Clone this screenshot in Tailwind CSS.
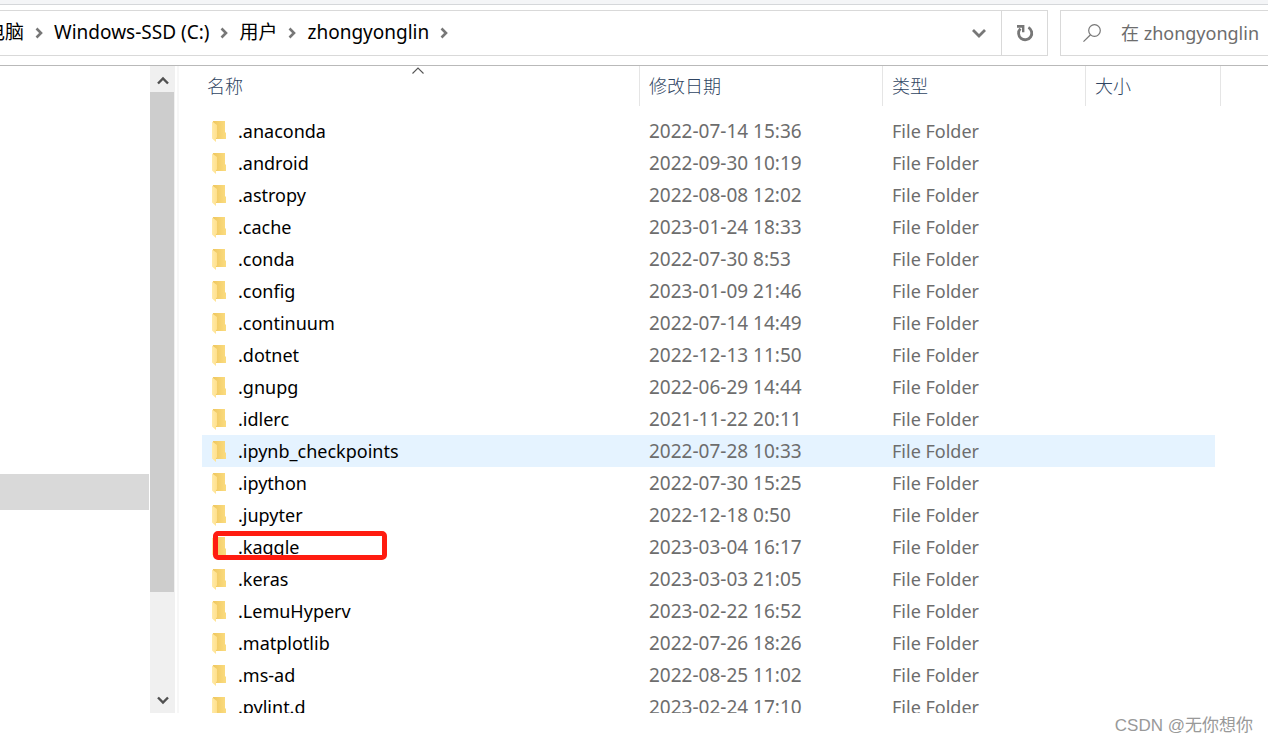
<!DOCTYPE html>
<html lang="zh-CN">
<head>
<meta charset="utf-8">
<title>zhongyonglin</title>
<script src="https://cdn.jsdelivr.net/npm/@tailwindcss/browser@4"></script>
</head>
<body class="flex h-screen flex-col overflow-hidden bg-white font-['Noto_Sans','Noto_Sans_CJK_SC',sans-serif] text-lg text-black">
<svg class="absolute size-0" aria-hidden="true">
  <defs>
    <linearGradient id="back" x1="0" x2="1"><stop offset="0" stop-color="#efc75f"/><stop offset="1" stop-color="#fbdc80"/></linearGradient>
    <linearGradient id="front" x1="0" x2="1"><stop offset="0" stop-color="#ffeaa8"/><stop offset="1" stop-color="#ffe08c"/></linearGradient>
    <symbol id="folder" viewBox="0 0 14 21">
      <path d="M1 0H13V11L14 12V18H2Z" fill="url(#back)"/>
      <path d="M0 0.5L5 4V16.5L4 17V21L0 17.5Z" fill="url(#front)"/>
    </symbol>
    <symbol id="crumb" viewBox="0 0 8 12"><path d="M1.5 1.5L6 6L1.5 10.5" fill="none" stroke="#777" stroke-width="2.6"/></symbol>
  </defs>
</svg>

<div class="h-[5px] shrink-0 border-b border-[#d5d7da] bg-[#f4f5f7]"></div>

<header class="flex shrink-0 gap-3 overflow-hidden border-b border-[#b9b9b9] pt-[5px] pb-[9px] text-[19px]">
  <div class="flex h-[46px] min-w-0 flex-1 border border-l-0 border-[#d9d9d9]">
    <nav aria-label="路径" class="-ml-3.5 flex min-w-0 flex-1 items-center gap-[11px] whitespace-nowrap">
      <a href="#">电脑</a>
      <svg class="h-3 w-2 shrink-0"><use href="#crumb"/></svg>
      <a href="#">Windows-SSD (C:)</a>
      <svg class="h-3 w-2 shrink-0"><use href="#crumb"/></svg>
      <a href="#">用户</a>
      <svg class="h-3 w-2 shrink-0"><use href="#crumb"/></svg>
      <a href="#">zhongyonglin</a>
      <svg class="h-3 w-2 shrink-0"><use href="#crumb"/></svg>
    </nav>
    <button aria-label="历史记录" class="flex w-11 items-center justify-center">
      <svg class="h-2.5 w-3.5" viewBox="0 0 14 10"><path d="M1 2L7 8L13 2" fill="none" stroke="#777" stroke-width="2.8"/></svg>
    </button>
    <button aria-label="刷新" class="flex w-[46px] items-center justify-center border-l border-[#d9d9d9]">
      <svg class="size-[18px]" viewBox="0 0 18 18"><path d="M12.4 3.4A6.6 6.6 0 1 1 4.4 4.6" fill="none" stroke="#777" stroke-width="2.8"/><path d="M1 1H8.4V8.2H6V3.8H1Z" fill="#777"/></svg>
    </button>
  </div>
  <div class="flex h-[46px] w-52 items-center gap-5 overflow-hidden border border-r-0 border-[#d9d9d9] pl-[22px]">
    <svg class="size-[18px] shrink-0" viewBox="0 0 18 18" fill="none" stroke="#777" stroke-width="1.2"><circle cx="11.5" cy="6.5" r="5.8"/><path d="M7.5 10.7L0.5 17.6"/></svg>
    <input type="text" aria-label="搜索" placeholder="在 zhongyonglin" class="min-w-0 flex-1 text-lg outline-none placeholder:text-[#6d6d6d]">
  </div>
</header>

<main class="mb-[30px] flex min-h-0 flex-1">
  <aside class="w-[150px] shrink-0 pt-[408px] pr-px">
    <div class="h-9 bg-[#d9d9d9]"></div>
  </aside>
  <div class="flex w-[25px] shrink-0 flex-col bg-[#f0f0f0]">
    <button aria-label="向上滚动" class="flex h-[26px] shrink-0 items-center justify-center pt-1">
      <svg class="h-2.5 w-3" viewBox="0 0 12 10"><path d="M1 7.5L6 2.5L11 7.5" fill="none" stroke="#505050" stroke-width="2.4"/></svg>
    </button>
    <div class="flex-1 pr-px"><div class="h-[84%] bg-[#cdcdcd]"></div></div>
    <button aria-label="向下滚动" class="flex h-[26px] shrink-0 items-center justify-center">
      <svg class="h-2.5 w-3" viewBox="0 0 12 10"><path d="M1 2.5L6 7.5L11 2.5" fill="none" stroke="#505050" stroke-width="2.4"/></svg>
    </button>
  </div>
  <section class="ml-0.5 min-w-0 flex-1 overflow-hidden border-l-2 border-[#f7f7f7] pr-[47px] pl-[23px]">
    <table class="w-full table-fixed border-separate border-spacing-0 text-left whitespace-nowrap">
      <colgroup><col><col class="w-[243px]"><col class="w-[203px]"><col class="w-[135px]"></colgroup>
      <thead class="text-[#2f4562]">
        <tr class="h-10">
          <th scope="col" class="relative border-r border-[#e5e5e5] pl-[5px] font-light">名称
            <svg class="absolute top-px left-[210px] h-[7px] w-3" viewBox="0 0 12 7"><path d="M0.5 6.5L6 1L11.5 6.5" fill="none" stroke="#555" stroke-width="1.1"/></svg>
          </th>
          <th scope="col" class="border-r border-[#e5e5e5] pl-[9px] font-light">修改日期</th>
          <th scope="col" class="border-r border-[#e5e5e5] pl-[9px] font-light">类型</th>
          <th scope="col" class="border-r border-[#e5e5e5] pl-[9px] font-light">大小</th>
        </tr>
      </thead>
      <tbody id="files" class="before:block before:h-[9px] before:content-['']"></tbody>
    </table>
  </section>
</main>
<p class="absolute right-[15px] bottom-1 font-['Liberation_Sans','Noto_Sans_CJK_SC',sans-serif] text-[17px] text-[#999]">CSDN @无你想你</p>

<script>
  const files = [
    ['.anaconda', '2022-07-14 15:36'],
    ['.android', '2022-09-30 10:19'],
    ['.astropy', '2022-08-08 12:02'],
    ['.cache', '2023-01-24 18:33'],
    ['.conda', '2022-07-30 8:53'],
    ['.config', '2023-01-09 21:46'],
    ['.continuum', '2022-07-14 14:49'],
    ['.dotnet', '2022-12-13 11:50'],
    ['.gnupg', '2022-06-29 14:44'],
    ['.idlerc', '2021-11-22 20:11'],
    ['.ipynb_checkpoints', '2022-07-28 10:33'],
    ['.ipython', '2022-07-30 15:25'],
    ['.jupyter', '2022-12-18 0:50'],
    ['.kaggle', '2023-03-04 16:17'],
    ['.keras', '2023-03-03 21:05'],
    ['.LemuHyperv', '2023-02-22 16:52'],
    ['.matplotlib', '2022-07-26 18:26'],
    ['.ms-ad', '2022-08-25 11:02'],
    ['.pylint.d', '2023-02-24 17:10'],
  ];
  const mark = '<span class="absolute top-0 left-[11px] h-[29px] w-[174px] rounded-[5px] border-[5px] border-[#ff1c10]"></span>';
  document.getElementById('files').innerHTML = files.map(([name, date]) => {
    const bg = name === '.ipynb_checkpoints' ? 'bg-[#e5f3ff]' : '';
    return `<tr class="h-8">
      <td class="relative p-0 ${bg}"><div class="flex h-8 items-center gap-3 pl-2.5"><svg class="h-[21px] w-3.5"><use href="#folder"/></svg><span>${name}</span></div>${name === '.kaggle' ? mark : ''}</td>
      <td class="p-0 pl-[9px] text-[19px] leading-8 text-[#6d6d6d] ${bg}">${date}</td>
      <td class="p-0 pl-[9px] text-lg leading-8 text-[#6d6d6d] ${bg}">File Folder</td>
      <td class="p-0 pr-1.5"><div class="h-8 ${bg}"></div></td>
    </tr>`;
  }).join('');
</script>
</body>
</html>
